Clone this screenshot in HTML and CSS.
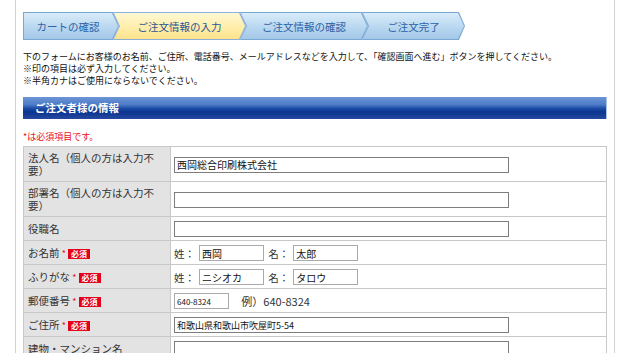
FILE: index.html
```html
<!DOCTYPE html>
<html lang="ja">

<head>
    <meta charset="UTF-8">
    <meta name="viewport" content="width=device-width, initial-scale=1.0">
    <title>ご注文情報の入力</title>
    <link rel="stylesheet" href="styles.css">
</head>

<body>
    <div class="page">

        <ol class="steps">
            <li class="step first">カートの確認</li>
            <li class="step current">ご注文情報の入力</li>
            <li class="step">ご注文情報の確認</li>
            <li class="step">ご注文完了</li>
        </ol>

        <p class="intro">
            下のフォームにお客様のお名前、ご住所、電話番号、メールアドレスなどを入力して、「確認画面へ進む」ボタンを押してください。<br>
            ※印の項目は必ず入力してください。<br>
            ※半角カナはご使用にならないでください。
        </p>

        <h2 class="bar">ご注文者様の情報</h2>

        <p class="note">*は必須項目です。</p>

        <table class="form">
            <tr class="tall">
                <th>法人名（個人の方は入力不要）</th>
                <td><input type="text" class="wide" value="西岡総合印刷株式会社"></td>
            </tr>
            <tr class="tall">
                <th>部署名（個人の方は入力不要）</th>
                <td><input type="text" class="wide"></td>
            </tr>
            <tr>
                <th>役職名</th>
                <td><input type="text" class="wide"></td>
            </tr>
            <tr>
                <th>お名前 <span class="req">*</span><span class="badge">必須</span></th>
                <td>
                    <span class="pre">姓：</span><input type="text" class="name" value="西岡">
                    <span class="pre">名：</span><input type="text" class="name" value="太郎">
                </td>
            </tr>
            <tr>
                <th>ふりがな <span class="req">*</span><span class="badge">必須</span></th>
                <td>
                    <span class="pre">姓：</span><input type="text" class="name" value="ニシオカ">
                    <span class="pre">名：</span><input type="text" class="name" value="タロウ">
                </td>
            </tr>
            <tr>
                <th>郵便番号 <span class="req">*</span><span class="badge">必須</span></th>
                <td>
                    <input type="text" class="zip" value="640-8324">
                    <span class="example">例）640-8324</span>
                </td>
            </tr>
            <tr>
                <th>ご住所 <span class="req">*</span><span class="badge">必須</span></th>
                <td><input type="text" class="wide small" value="和歌山県和歌山市吹屋町5-54"></td>
            </tr>
            <tr>
                <th>建物・マンション名</th>
                <td><input type="text" class="wide"></td>
            </tr>
        </table>

    </div>
</body>

</html>
```

FILE: styles.css
```css
body {
    margin: 0px;
    background: white;
    font-family: "Noto Sans CJK JP", "DejaVu Sans", sans-serif;
    color: #222;
}

.page {
    width: 584px;
    margin-left: 15px;
    padding: 12px 7px 20px 7px;
    border-left: 1px solid #d2d2d2;
    border-right: 1px solid #d2d2d2;
}

/* ステップ */
.steps {
    display: flex;
    list-style: none;
    margin: 0px;
    padding: 0px;
    height: 28px;
}

.step {
    position: relative;
    isolation: isolate;
    display: flex;
    align-items: center;
    justify-content: center;
    height: 28px;
    margin-left: -6px;
    padding: 0px 6px 0px 6px;
    font-size: 10.5px;
    color: #2f62a6;
}

.step:nth-child(1) { width: 90px; margin-left: 0px; padding-left: 0px; }
.step:nth-child(2) { width: 121px; }
.step:nth-child(3) { width: 116px; }
.step:nth-child(4) { width: 91px; }

.step::before,
.step::after {
    content: '';
    position: absolute;
    z-index: -1;
    clip-path: polygon(0 0, calc(100% - 6px) 0, 100% 50%, calc(100% - 6px) 100%, 0 100%, 6px 50%);
}

.step::before {
    inset: 0px;
    background: #7aa8d4;
}

.step::after {
    inset: 1px 1px 1px 1px;
    background: linear-gradient(#d9ecf9, #b6d5ef 60%, #a4c8e8);
}

.step.first::before,
.step.first::after {
    clip-path: polygon(0 0, calc(100% - 6px) 0, 100% 50%, calc(100% - 6px) 100%, 0 100%);
}

.step.current {
    color: #2a5596;
}

.step.current::before {
    background: #8fb0d6;
}

.step.current::after {
    background: linear-gradient(#fff8d4, #ffeeaa 55%, #fde28c);
}

.intro {
    margin: 11px 0px 10px 0px;
    font-size: 9px;
    line-height: 12px;
    color: #111;
}

.bar {
    margin: 0px;
    height: 22px;
    line-height: 22px;
    padding-left: 12px;
    font-size: 10.5px;
    color: white;
    background: linear-gradient(#6c96d6 0%, #4d7bc6 35%, #1c4ca6 52%, #0a358f 68%, #27489f 100%);
    border-right: 1px solid #a9c2ea;
}

.note {
    margin: 12px 0px 3px 0px;
    font-size: 9px;
    line-height: 12px;
    color: #e8101c;
}

/* フォーム */
.form {
    width: 100%;
    border-collapse: collapse;
    border: 1px solid #c8c8c8;
}

.form th,
.form td {
    border: 1px solid #c8c8c8;
    height: 23px;
    padding: 0px;
}

.form tr.tall th,
.form tr.tall td {
    height: 34px;
}

.form th {
    width: 132px;
    padding: 0px 10px 0px 4px;
    background: #e3e3e3;
    text-align: left;
    font-weight: normal;
    font-size: 10.5px;
    line-height: 13px;
    color: #333;
}

.form td {
    padding-left: 3px;
    font-size: 10.5px;
    color: #333;
}

input {
    box-sizing: border-box;
    height: 16px;
    margin: 0px;
    padding: 0px 2px;
    border: 1px solid #7d7d7d;
    font-family: "Noto Sans CJK JP", "DejaVu Sans", sans-serif;
    font-size: 10px;
    color: #111;
    vertical-align: middle;
}

input.wide {
    width: 335px;
}

input.small {
    font-size: 9px;
}

input.name {
    width: 65px;
    border-color: #aaa;
}

input.zip {
    width: 55px;
    font-size: 8px;
    border-color: #aaa;
}

.pre {
    vertical-align: middle;
}

.pre + input {
    margin-left: 4px;
}

input + .pre {
    margin-left: 2px;
}

.example {
    margin-left: 10px;
    font-size: 11px;
    vertical-align: middle;
}

.req {
    color: #e8101c;
    font-size: 9px;
}

.badge {
    display: inline-block;
    width: 22px;
    height: 10px;
    line-height: 10px;
    margin-left: 2px;
    background: #e4001b;
    color: white;
    text-align: center;
    font-size: 8px;
    font-weight: bold;
    vertical-align: 0px;
}
```
